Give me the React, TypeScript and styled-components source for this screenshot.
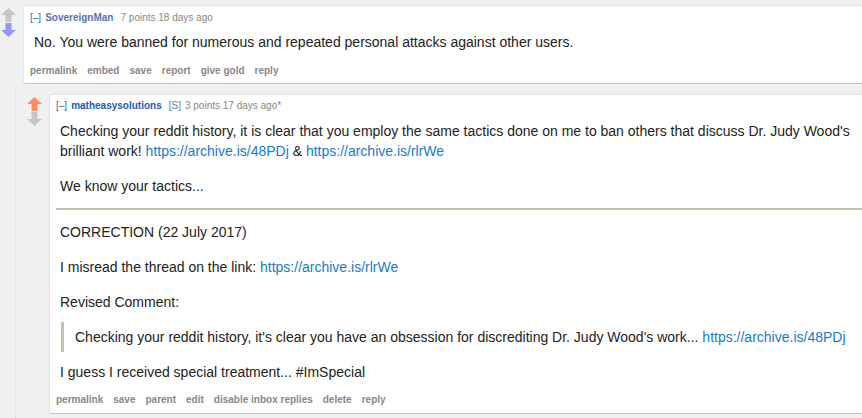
import styled, {createGlobalStyle} from 'styled-components';

const GlobalStyle = createGlobalStyle`
	html, body {
		margin: 0;
		padding: 0;
		background: #f0f0f0;
		overflow: hidden;
	}
	body {
		font-family: 'Liberation Sans', Arial, sans-serif;
	}
`;

const Page = styled.div`
	padding-top: 5px;
	height: 418px;
	box-sizing: border-box;
	overflow: hidden;
`;

const Thread = styled.div`
	display: flex;
	align-items: flex-start;
`;

const VoteColumn = styled.div`
	width: 23px;
	flex-shrink: 0;
	display: flex;
	flex-direction: column;
	align-items: flex-start;
	gap: 1px;
	padding: 3px 0 0 1px;
	box-sizing: border-box;
`;

const Box = styled.div`
	flex: 1;
	margin-right: -12px;
	background: #fff;
	border: 1px solid #e3e3e3;
	border-bottom-color: #c6c6c6;
	border-radius: 3px;
	padding: ${props => (props.$nested ? '4px 6px 6px' : '5px 6px 5px')};
`;

const Tagline = styled.div`
	font-size: 10px;
	line-height: 14px;
	color: #888;
	display: flex;
	gap: 4px;
	white-space: nowrap;
`;

const Expand = styled.span`
	color: #369;
`;

const Author = styled.span`
	font-weight: bold;
	color: ${props => (props.$submitter ? '#2458b3' : '#5872a8')};
	margin-right: 3px;
`;

const Flair = styled.span`
	color: #5c79b3;
`;

const Md = styled.div`
	margin: ${props => (props.$nested ? '8px 0 11px' : '7px 0 12px')};
	font-size: 14px;
	line-height: 20px;
	color: #222;
`;

const Para = styled.p`
	margin: 0 0 15px 4px;

	&:last-child {
		margin-bottom: 0;
	}
`;

const Link = styled.a`
	color: #1a7ac8;
	text-decoration: none;
`;

const Rule = styled.hr`
	margin: -3px 0 12px;
	border: none;
	height: 2px;
	background: #c5c1ad;
`;

const Quote = styled.blockquote`
	margin: -5px 0 10px 5px;
	padding: 5px 0 5px 11px;
	border-left: 3px solid #c5c1ad;

	p {
		margin: 0;
	}
`;

const Buttons = styled.ul`
	list-style: none;
	margin: 0;
	padding: 0;
	display: flex;
	gap: 10px;
	font-size: 10px;
	line-height: 14px;
	white-space: nowrap;
`;

const Button = styled.li`
	font-weight: bold;
	color: #888;
`;

const Children = styled.div`
	margin: 5px 0 0 15px;
	padding: 5px 0 0 10px;
	border-left: 1px dotted #d6d6d6;
	min-height: 400px;
`;

const Arrow = ({dir, color}: {dir: 'up' | 'down'; color: string}) => (
	<svg width="15" height="14" viewBox="0 0 15 14">
		{dir === 'up' ? (
			<polygon points="7.5,0 15,7 10.5,7 10.5,14 4.5,14 4.5,7 0,7" fill={color} />
		) : (
			<polygon points="4.5,0 10.5,0 10.5,7 15,7 7.5,14 0,7 4.5,7" fill={color} />
		)}
	</svg>
);

const ButtonRow = ({items}: {items: string[]}) => (
	<Buttons>
		{items.map(item => (
			<Button key={item}>{item}</Button>
		))}
	</Buttons>
);

const App = () => {
	return (
		<>
			<GlobalStyle />
			<Page>
				<Thread>
					<VoteColumn>
						<Arrow dir="up" color="#c6c6c6" />
						<Arrow dir="down" color="#9494ff" />
					</VoteColumn>
					<Box>
						<Tagline>
							<Expand>[–]</Expand>
							<Author>SovereignMan</Author>
							<span>7 points 18 days ago</span>
						</Tagline>
						<Md>
							<Para>No. You were banned for numerous and repeated personal attacks against other users.</Para>
						</Md>
						<ButtonRow items={['permalink', 'embed', 'save', 'report', 'give gold', 'reply']} />
					</Box>
				</Thread>
				<Children>
					<Thread>
						<VoteColumn>
							<Arrow dir="up" color="#ff8b60" />
							<Arrow dir="down" color="#c6c6c6" />
						</VoteColumn>
						<Box $nested>
							<Tagline>
								<Expand>[–]</Expand>
								<Author $submitter>matheasysolutions</Author>
								<Flair>[S]</Flair>
								<span>3 points 17 days ago*</span>
							</Tagline>
							<Md $nested>
								<Para>
									Checking your reddit history, it is clear that you employ the same tactics done on me to ban
									others that discuss Dr. Judy Wood's brilliant work!{' '}
									<Link href="#">https://archive.is/48PDj</Link> &amp;{' '}
									<Link href="#">https://archive.is/rlrWe</Link>
								</Para>
								<Para>We know your tactics...</Para>
								<Rule />
								<Para>CORRECTION (22 July 2017)</Para>
								<Para>
									I misread the thread on the link: <Link href="#">https://archive.is/rlrWe</Link>
								</Para>
								<Para>Revised Comment:</Para>
								<Quote>
									<p>
										Checking your reddit history, it's clear you have an obsession for discrediting Dr. Judy
										Wood's work... <Link href="#">https://archive.is/48PDj</Link>
									</p>
								</Quote>
								<Para>I guess I received special treatment... #ImSpecial</Para>
							</Md>
							<ButtonRow items={['permalink', 'save', 'parent', 'edit', 'disable inbox replies', 'delete', 'reply']} />
						</Box>
					</Thread>
				</Children>
			</Page>
		</>
	);
};

export default App;
